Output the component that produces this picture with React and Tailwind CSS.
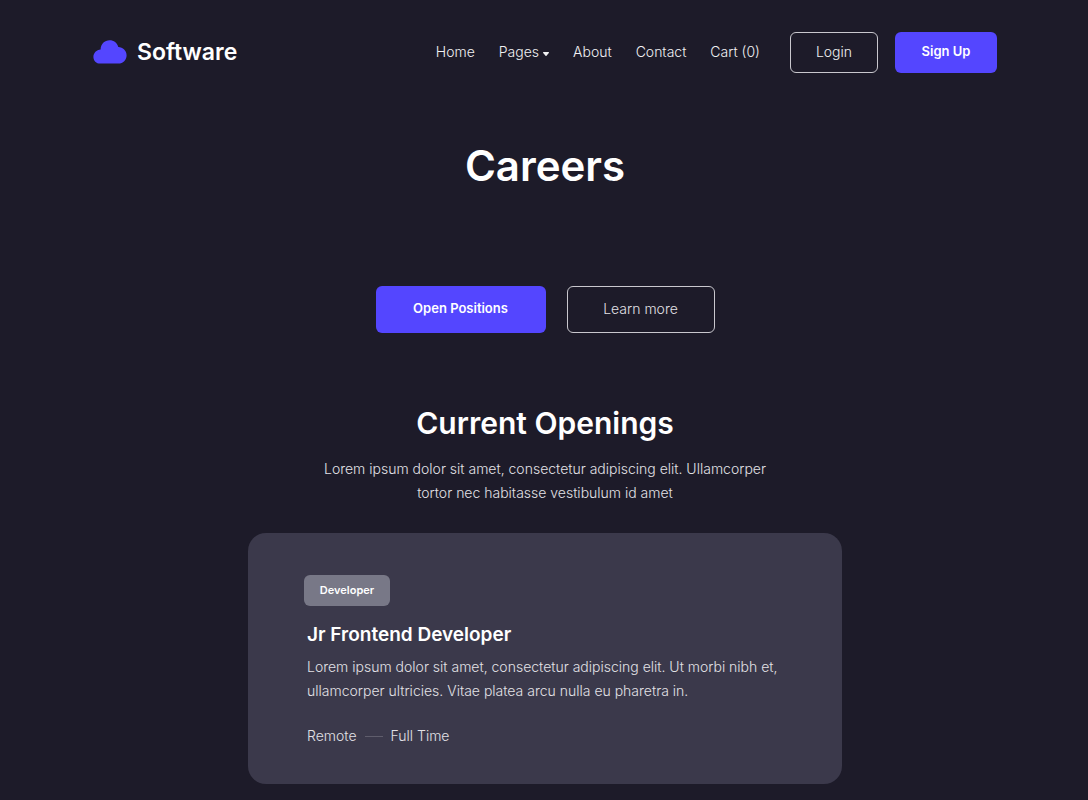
const links = [
  { label: "Home" },
  { label: "Pages", menu: true },
  { label: "About" },
  { label: "Contact" },
  { label: "Cart (0)" },
];

function CloudLogo() {
  return (
    <svg className="h-6 w-[34px] shrink-0" viewBox="0 0 34 24" fill="#5446ff" aria-hidden="true">
      <path d="M7.2 23.6C3.2 23.6 0.4 20.6 0.4 16.9C0.4 12.9 3.5 9.7 7.6 9.4C7.7 4.1 11.6 0.2 16.6 0.2C20.8 0.2 24.2 2.9 25.3 7C29.9 7.1 33.6 10.7 33.6 15.3C33.6 19.9 30 23.6 25.4 23.6Z" />
    </svg>
  );
}

function Header() {
  return (
    <header className="mx-auto flex w-full max-w-[904px] items-center justify-between pt-8">
      <a href="#home" className="flex items-center gap-2.5 pb-0.5 text-[23px] leading-8 font-semibold text-white">
        <CloudLogo />
        <span>Software</span>
      </a>
      <div className="flex items-center">
        <nav className="mr-[30px] flex items-center gap-6 pb-0.5 text-sm text-[#f1f1f3]">
          {links.map((link) => (
            <a key={link.label} href="#nav" className="flex items-center gap-1 whitespace-nowrap">
              {link.label}
              {link.menu && (
                <svg className="mt-1 h-1 w-1.5" viewBox="0 0 6 4" fill="currentColor" aria-hidden="true">
                  <path d="M0.5 0H5.5Q6.3 0.2 5.8 0.9L3.5 3.7Q3 4.2 2.5 3.7L0.2 0.9Q-0.3 0.2 0.5 0Z" />
                </svg>
              )}
            </a>
          ))}
        </nav>
        <div className="flex gap-[17px]">
          <button type="button" className="h-[41px] w-[88px] rounded-md border border-[#c9c8ce] pb-0.5 text-sm text-[#f1f1f3]">
            Login
          </button>
          <button type="button" className="h-[41px] w-[102px] rounded-md bg-[#5446ff] pb-0.5 text-[13px] font-semibold text-white">
            Sign Up
          </button>
        </div>
      </div>
    </header>
  );
}

function JobCard() {
  return (
    <article className="mx-auto mt-7 w-full max-w-[594px] rounded-[18px] bg-[#3b394b] px-14 pt-[42px] pb-9">
      <span className="flex h-[31px] w-[86px] items-center justify-center rounded-md bg-[#787887] text-[11px] font-semibold text-white">
        Developer
      </span>
      <div className="pl-[3px]">
        <h3 className="mt-[15px] text-[19px] leading-7 font-semibold text-white">Jr Frontend Developer</h3>
        <p className="mt-1.5 text-sm leading-6">
          Lorem ipsum dolor sit amet, consectetur adipiscing elit. Ut morbi nibh et, ullamcorper ultricies. Vitae platea
          arcu nulla eu pharetra in.
        </p>
        <div className="mt-[21px] flex items-center gap-2 text-sm leading-6">
          <span>Remote</span>
          <span className="h-px w-[18px] bg-[#5f5d6c]" />
          <span>Full Time</span>
        </div>
      </div>
    </article>
  );
}

export default function App() {
  return (
    <div className="min-h-screen bg-[#1d1b29] pr-6 pb-4 pl-[26px] font-['Inter',sans-serif] font-light text-[#e2e1e6]">
      <Header />
      <main>
        <h1 className="mt-[65px] text-center text-[42px] leading-14 font-semibold text-white">Careers</h1>
        <div className="mt-[92px] flex justify-center gap-[21px]">
          <button type="button" className="h-[47px] w-[170px] rounded-md bg-[#5446ff] pb-0.5 text-[13px] font-semibold text-white">
            Open Positions
          </button>
          <button type="button" className="h-[47px] w-[148px] rounded-md border border-[#c9c8ce] pb-0.5 text-sm">
            Learn more
          </button>
        </div>
        <h2 className="mt-[70px] text-center text-3xl leading-10 font-semibold text-white">Current Openings</h2>
        <p className="mx-auto mt-3.5 max-w-[470px] text-center text-sm leading-6">
          Lorem ipsum dolor sit amet, consectetur adipiscing elit. Ullamcorper tortor nec habitasse vestibulum id amet
        </p>
        <JobCard />
      </main>
    </div>
  );
}
